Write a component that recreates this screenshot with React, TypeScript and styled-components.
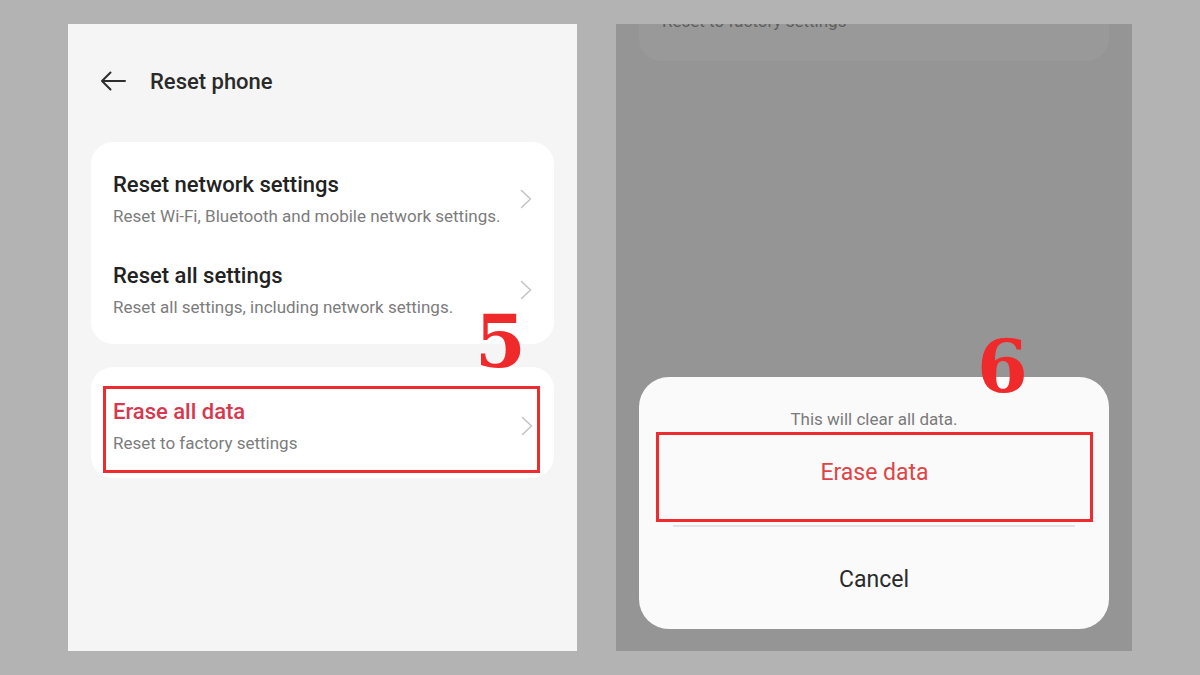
import React from "react";
import styled, { createGlobalStyle } from "styled-components";

const Global = createGlobalStyle`
  html, body { margin: 0; padding: 0; background: #b3b3b3; }
  body { font-family: Roboto, "Noto Sans", Arial, sans-serif; }
`;

const Stage = styled.div`
  width: 1200px;
  height: 675px;
  box-sizing: border-box;
  padding: 24px 0 0 68px;
  display: flex;
  gap: 39px;
  align-items: flex-start;
`;

const PhonePanel = styled.div`
  position: relative;
  width: 509px;
  height: 627px;
  box-sizing: border-box;
  background: #f5f5f5;
  padding: 29px 23px 0;
  display: flex;
  flex-direction: column;
`;

const DimPanel = styled.div`
  position: relative;
  width: 516px;
  height: 627px;
  box-sizing: border-box;
  background: #959595;
  padding: 0 23px 22px;
  display: flex;
  flex-direction: column;
  overflow: hidden;
`;

const Header = styled.div`
  height: 56px;
  display: flex;
  align-items: center;
  gap: 24px;
  padding-left: 9px;
`;

const HeaderTitle = styled.div`
  font-size: 22px;
  font-weight: 500;
  color: #2a2a2a;
`;

const Card = styled.div<{ $pad: string; $mt: number }>`
  background: #ffffff;
  border-radius: 22px;
  padding: ${(p) => p.$pad};
  margin-top: ${(p) => p.$mt}px;
  display: flex;
  flex-direction: column;
  gap: 37px;
`;

const Row = styled.div`
  display: flex;
  align-items: center;
  justify-content: space-between;
`;

const RowText = styled.div`
  display: flex;
  flex-direction: column;
  gap: 8px;
`;

const RowTitle = styled.div<{ $danger?: boolean }>`
  font-size: 22px;
  line-height: 26px;
  font-weight: 500;
  color: ${(p) => (p.$danger ? "#d7384d" : "#222222")};
`;

const RowSub = styled.div`
  font-size: 17px;
  line-height: 20px;
  color: #7c7c7c;
`;

const Highlight = styled.div<{ $pad: string }>`
  border: 3px solid #ee2b2e;
  padding: ${(p) => p.$pad};
`;

const FadedCard = styled.div`
  height: 37px;
  flex-shrink: 0;
  background: #999999;
  border-radius: 0 0 22px 22px;
  padding-left: 23px;
  overflow: hidden;
`;

const FadedText = styled.div`
  margin-top: -13px;
  font-size: 17px;
  line-height: 20px;
  color: #5f5f5f;
`;

const Dialog = styled.div`
  margin-top: auto;
  background: #fafafa;
  border-radius: 30px;
  padding: 32px 0 36px;
  display: flex;
  flex-direction: column;
`;

const DialogMsg = styled.div`
  font-size: 17px;
  line-height: 20px;
  color: #7a7a7a;
  text-align: center;
`;

const DialogBox = styled.div`
  margin: 3px 16px 0 17px;
  height: 90px;
  box-sizing: border-box;
  border: 3px solid #ee2b2e;
  padding-top: 25px;
`;

const DialogAction = styled.div<{ $danger?: boolean }>`
  font-size: 23px;
  line-height: 26px;
  text-align: center;
  color: ${(p) => (p.$danger ? "#de4447" : "#2b2b2b")};
`;

const Divider = styled.div`
  height: 2px;
  background: #e3e3e3;
  margin: 3px 34px 40px;
`;

const StepNumber = styled.div<{ $left: number; $top: number }>`
  position: absolute;
  left: ${(p) => p.$left}px;
  top: ${(p) => p.$top}px;
  font-family: "DejaVu Serif", "Liberation Serif", serif;
  font-weight: 700;
  font-size: 73px;
  line-height: 1;
  color: #f02a2a;
`;

const BackArrow = () => (
  <svg width="26" height="20" viewBox="0 0 26 20" fill="none">
    <path d="M25 10H2M10.5 1.5L2 10l8.5 8.5" stroke="#2e2e2e" strokeWidth="2" strokeLinecap="round" strokeLinejoin="round" />
  </svg>
);

const Chevron = () => (
  <svg width="12" height="20" viewBox="0 0 12 20" fill="none">
    <path d="M1.5 1.5L10.5 10l-9 8.5" stroke="#c4c4c4" strokeWidth="1.6" strokeLinecap="round" strokeLinejoin="round" />
  </svg>
);

const SettingRow = ({ title, sub, danger }: { title: string; sub: string; danger?: boolean }) => (
  <Row>
    <RowText>
      <RowTitle $danger={danger}>{title}</RowTitle>
      <RowSub>{sub}</RowSub>
    </RowText>
    <Chevron />
  </Row>
);

export default function App() {
  return (
    <>
      <Global />
      <Stage>
        <PhonePanel>
          <Header>
            <BackArrow />
            <HeaderTitle>Reset phone</HeaderTitle>
          </Header>
          <Card $pad="30px 22px 27px" $mt={33}>
            <SettingRow title="Reset network settings" sub="Reset Wi-Fi, Bluetooth and mobile network settings." />
            <SettingRow title="Reset all settings" sub="Reset all settings, including network settings." />
          </Card>
          <Card $pad="19px 14px 5px 12px" $mt={23}>
            <Highlight $pad="10px 4px 17px 7px">
              <SettingRow title="Erase all data" sub="Reset to factory settings" danger />
            </Highlight>
          </Card>
          <StepNumber $left={407} $top={281}>5</StepNumber>
        </PhonePanel>
        <DimPanel>
          <FadedCard>
            <FadedText>Reset to factory settings</FadedText>
          </FadedCard>
          <Dialog>
            <DialogMsg>This will clear all data.</DialogMsg>
            <DialogBox>
              <DialogAction $danger>Erase data</DialogAction>
            </DialogBox>
            <Divider />
            <DialogAction>Cancel</DialogAction>
          </Dialog>
          <StepNumber $left={361} $top={306}>6</StepNumber>
        </DimPanel>
      </Stage>
    </>
  );
}
